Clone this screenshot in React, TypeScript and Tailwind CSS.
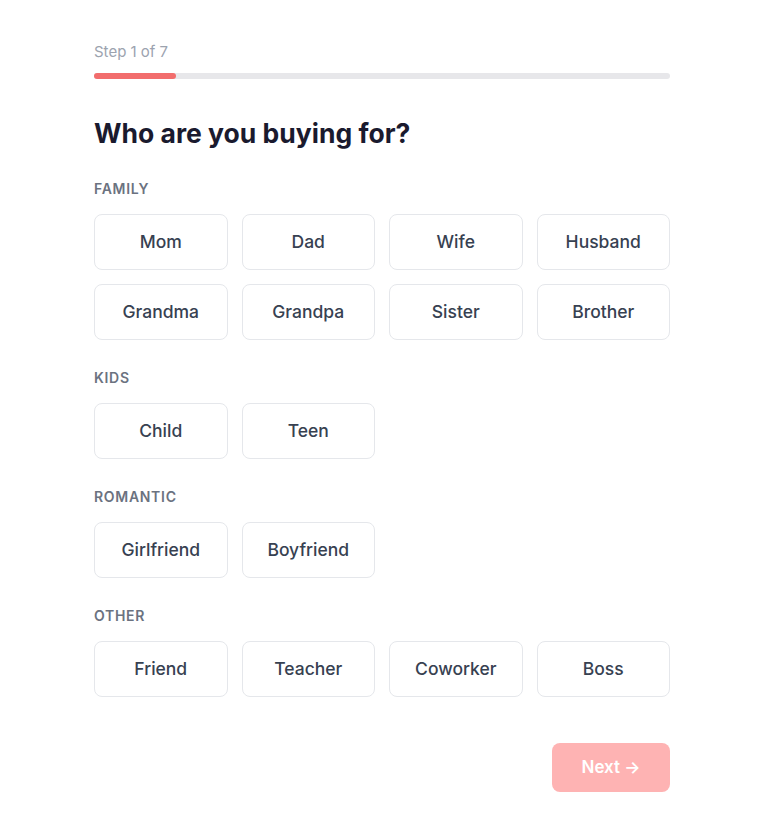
import React from "react";

const sections: { label: string; items: string[] }[] = [
  { label: "Family", items: ["Mom", "Dad", "Wife", "Husband", "Grandma", "Grandpa", "Sister", "Brother"] },
  { label: "Kids", items: ["Child", "Teen"] },
  { label: "Romantic", items: ["Girlfriend", "Boyfriend"] },
  { label: "Other", items: ["Friend", "Teacher", "Coworker", "Boss"] },
];

export default function App() {
  return (
    <div className="min-h-screen bg-white" style={{ fontFamily: "Inter, 'Noto Sans', sans-serif" }}>
      <div className="ml-[94px] w-[576px] pt-[42px] pb-10">
        <div className="text-[15px] leading-5 text-[#9ca3af]">Step 1 of 7</div>
        <div className="mt-[11px] h-[6px] w-full rounded-full bg-[#e7e7ea]">
          <div className="h-[6px] w-[82px] rounded-full bg-[#f26d6d]" />
        </div>
        <h1 className="mt-[38px] text-[26.5px] leading-8 font-bold text-[#1a1a2e]">
          Who are you buying for?
        </h1>
        <div className="mt-[30px] flex flex-col gap-[28px]">
          {sections.map((s) => (
            <div key={s.label}>
              <div className="text-sm leading-5 font-semibold uppercase text-[#6b7280] tracking-[0.05em]">
                {s.label}
              </div>
              <div className="mt-[15px] grid grid-cols-4 gap-[14px]">
                {s.items.map((it) => (
                  <button
                    key={it}
                    className="h-[56px] rounded-lg border border-[#e5e7eb] bg-white text-[17.5px] font-medium text-[#374151]"
                  >
                    {it}
                  </button>
                ))}
              </div>
            </div>
          ))}
        </div>
        <div className="mt-[46px] flex justify-end">
          <button className="h-[49px] w-[118px] rounded-lg bg-[#feb3b3] text-[17px] font-semibold text-white">
            Next →
          </button>
        </div>
      </div>
    </div>
  );
}
